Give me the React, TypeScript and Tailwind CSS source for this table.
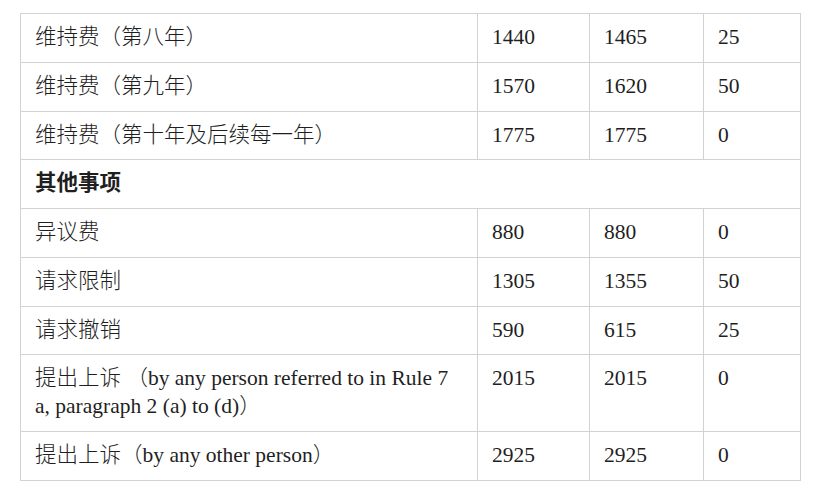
const rows: [string, string, string, string][] = [
  ['维持费（第八年）', '1440', '1465', '25'],
  ['维持费（第九年）', '1570', '1620', '50'],
  ['维持费（第十年及后续每一年）', '1775', '1775', '0'],
];

const others: [string, string, string, string][] = [
  ['异议费', '880', '880', '0'],
  ['请求限制', '1305', '1355', '50'],
  ['请求撤销', '590', '615', '25'],
  ['提出上诉 （by any person referred to in Rule 7 a, paragraph 2 (a) to (d)）', '2015', '2015', '0'],
  ['提出上诉（by any other person）', '2925', '2925', '0'],
];

const cell = 'border border-[#d2d2d2] px-[14px] py-[10px] align-top';

function FeeRow({ row }: { row: [string, string, string, string] }) {
  return (
    <tr>
      <td className={cell}>{row[0]}</td>
      <td className={cell}>{row[1]}</td>
      <td className={cell}>{row[2]}</td>
      <td className={cell}>{row[3]}</td>
    </tr>
  );
}

export default function App() {
  return (
    <div className="min-h-[494px] bg-white pt-[13px] pl-[20px] [font-family:'Liberation_Serif','Noto_Sans_CJK_SC',serif] text-[21.5px] leading-[27.75px] font-light text-[#1f1f1f]">
      <table className="w-[780px] table-fixed border-collapse">
        <colgroup>
          <col className="w-[457px]" />
          <col className="w-[112px]" />
          <col className="w-[114px]" />
          <col className="w-[97px]" />
        </colgroup>
        <tbody>
          {rows.map((r) => (
            <FeeRow key={r[0]} row={r} />
          ))}
          <tr>
            <td colSpan={4} className={cell + ' font-bold'}>
              其他事项
            </td>
          </tr>
          {others.map((r) => (
            <FeeRow key={r[0]} row={r} />
          ))}
        </tbody>
      </table>
    </div>
  );
}
